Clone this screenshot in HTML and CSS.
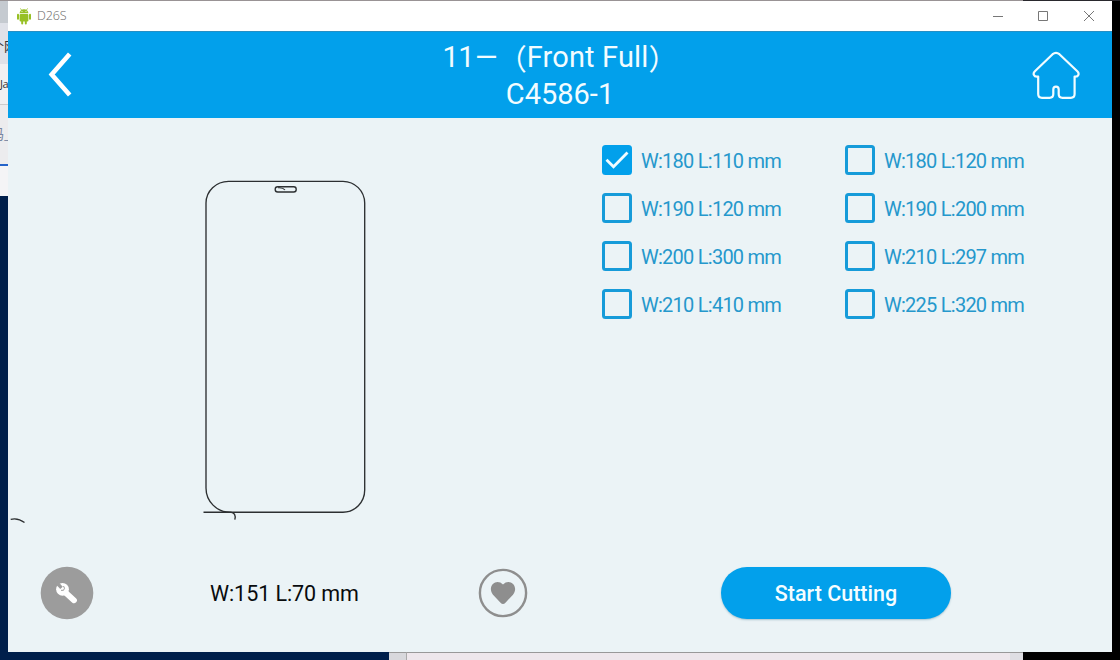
FILE: index.html
```html
<!DOCTYPE html>
<html lang="en">
<head>
<meta charset="utf-8">
<title>D26S</title>
<link rel="stylesheet" href="styles.css">
</head>
<body>
<div class="desktop">
  <div class="top-edge"><span class="top-light"></span><span class="top-dark"></span></div>
  <aside class="behind-left">
    <div class="tab-strip"></div>
    <div class="tab-label"><span>个网</span></div>
    <div class="bookmark"><span>Ja</span></div>
    <div class="link-row"><span>码_</span></div>
    <div class="blank-row"></div>
  </aside>
  <main class="window">
    <div class="titlebar">
      <svg class="android" width="14" height="17" viewBox="0 0 14 17" fill="#97c024">
        <path d="M2.6 5.3a4.4 4 0 0 1 8.8 0z"/>
        <path d="M3.4.4l1.4 2M10.6.4l-1.4 2" stroke="#97c024" stroke-width=".8"/>
        <rect x="2.6" y="5.9" width="8.8" height="7.6" rx="1"/>
        <rect x="0" y="5.8" width="2" height="6" rx="1"/><rect x="12" y="5.8" width="2" height="6" rx="1"/>
        <rect x="4.2" y="12" width="2" height="4.6" rx="1"/><rect x="7.8" y="12" width="2" height="4.6" rx="1"/>
        <circle cx="5" cy="3.5" r=".5" fill="#fff"/><circle cx="9" cy="3.5" r=".5" fill="#fff"/>
      </svg>
      <span class="app-name">D26S</span>
      <svg class="controls" width="104" height="12" viewBox="0 0 104 12" fill="none" stroke="#777" stroke-width="1">
        <path d="M0 6.5h10M45.500 1.500h9v9h-9zM91 1l10 10M101 1L91 11"/>
      </svg>
    </div>
    <header class="header">
      <svg class="back" width="24" height="46" viewBox="0 0 24 46" fill="none" stroke="#fff" stroke-width="4.600"><path d="M21.700 2L3.700 22.500l18 20.500"/></svg>
      <h1 class="title"><span class="title-model"><span class="num">11</span><span class="dash">—</span><span class="paren">（</span><span class="name">Front Full</span><span class="paren">）</span></span><span class="title-code">C4586-1</span></h1>
      <svg class="home" width="48" height="49" viewBox="0 0 48 49" fill="none" stroke="#f2fcff" stroke-width="2.200" stroke-linejoin="round"><path d="M20.600 3.200Q24 .500 27.400 3.200L45.300 20.200C47.700 22.500 46.500 25.700 43.300 25.600H42.600V43Q42.600 46.800 38.800 46.800H30.500Q26.700 46.800 26.700 43V38.500C26.700 34.700 21.300 34.700 21.300 38.500V43Q21.300 46.800 17.500 46.800H10Q6.200 46.800 6.200 43V25.600H5C1.800 25.700.500 22.500 2.900 20.200Z"/></svg>
    </header>
    <section class="content">
      <div class="preview">
        <svg width="390" height="430" viewBox="0 0 390 430" fill="none" stroke="#2c2f31" stroke-width="1.350">
          <path d="M220.500 63.300H335A21.700 22 0 0 1 356.700 85V372A21.700 22.200 0 0 1 335 394.200H222A24 24.200 0 0 1 198 370V85A22.500 21.700 0 0 1 220.500 63.300Z"/>
          <rect x="267.200" y="68.700" width="21" height="5.300" rx="2.500"/>
          <path d="M270 69.800q5-.500 7 2.200" stroke-width="1.100"/>
          <path d="M195.500 394.200h27q6 .700 4.300 7.500M2.700 401.300Q10 399.500 16.500 404.500"/>
        </svg>
      </div>
      <div class="sizes">
        <label class="size"><span class="box checked"><svg width="30" height="30" viewBox="0 0 30 30" fill="none" stroke="#f2fcff" stroke-width="2.800"><path d="M4.500 14.800l7 7L25.500 7.500"/></svg></span><span class="size-text">W:180 L:110 mm</span></label>
        <label class="size"><span class="box"></span><span class="size-text">W:180 L:120 mm</span></label>
        <label class="size"><span class="box"></span><span class="size-text">W:190 L:120 mm</span></label>
        <label class="size"><span class="box"></span><span class="size-text">W:190 L:200 mm</span></label>
        <label class="size"><span class="box"></span><span class="size-text">W:200 L:300 mm</span></label>
        <label class="size"><span class="box"></span><span class="size-text">W:210 L:297 mm</span></label>
        <label class="size"><span class="box"></span><span class="size-text">W:210 L:410 mm</span></label>
        <label class="size"><span class="box"></span><span class="size-text">W:225 L:320 mm</span></label>
      </div>
    </section>
    <footer class="footer">
      <svg class="tool" width="54" height="54" viewBox="0 0 54 54"><circle cx="27" cy="27" r="26.300" fill="#9c9c9c"/>
        <path d="M22 23.300l12 11" stroke="#fff" stroke-width="5.800" stroke-linecap="round"/>
        <circle cx="22.500" cy="23.300" r="6.400" fill="#fff"/>
        <path d="M16.500 16.500l5 5.300" stroke="#9c9c9c" stroke-width="3.400"/>
        <path d="M23.500 20q2 2.300 0 4.300h-2.500" fill="none" stroke="#9c9c9c" stroke-width="1"/>
      </svg>
      <span class="measure">W:151 L:70 mm</span>
      <svg class="heart" width="50" height="50" viewBox="0 0 50 50"><circle cx="25" cy="25" r="23.100" fill="none" stroke="#8e8e8e" stroke-width="2.400"/><path d="M25 36Q23.800 36 22.300 34.400L15 26.700C8.500 18.500 18.300 9.500 25 16.500C31.700 9.500 41.500 18.500 35 26.700L27.700 34.400Q26.200 36 25 36Z" fill="#8e8e8e"/></svg>
      <button class="start">Start Cutting</button>
    </footer>
  </main>
  <div class="right-edge"></div>
  <div class="bottom-edge"><span class="b-navy"></span><span class="b-gray"></span><span class="b-pale"></span><span class="b-light"></span><span class="b-black"></span></div>
</div>
</body>
</html>
```

FILE: styles.css
```css
* { box-sizing: border-box; }
body { margin: 0; font-family: Roboto, "Noto Sans CJK SC", sans-serif; }
.desktop {
  width: 1120px; height: 660px; overflow: hidden;
  display: grid;
  grid-template-columns: 8px 1104px 8px;
  grid-template-rows: 1px 651px 8px;
  background: #000;
}
.top-edge, .bottom-edge { grid-column: 1 / -1; display: flex; }
.top-light { width: 1023px; background: #999395; }
.top-dark { flex: 1; background: #29282d; }

.behind-left {
  overflow: hidden; background: #001f4b;
  font: 13px/20px "Noto Sans CJK SC", sans-serif; color: #333;
  display: flex; flex-direction: column;
}
.behind-left > div { flex: none; overflow: hidden; display: flex; align-items: center; white-space: nowrap; }
.tab-strip { height: 22px; background: #c5cad0; }
.tab-label { height: 41px; background: #dfe1e8; }
.tab-label span { margin: 4px 0 0 -9px; }
.bookmark { height: 41px; background: #f0f0f2; border-bottom: 1px solid #ccc; }
.bookmark span { font: 11px/16px "Open Sans", sans-serif; letter-spacing: -.5px; }
.link-row { height: 61px; background: #ececee; border-bottom: 2px solid #2463c9; color: #7885a0; }
.link-row span { margin: 0 0 3px -10px; font-size: 14px; }
.blank-row { height: 30px; background: #f4f4f6; }

.window { background: #ebf3f6; display: grid; grid-template-rows: 30px 87px 430px 1fr; }
.titlebar { background: #fff; display: flex; align-items: center; padding: 0 15px 0 9px; }
.app-name { margin-left: 6px; font: 300 12.5px/18px "Open Sans", sans-serif; letter-spacing: -.1px; color: #666; }
.controls { margin-left: auto; margin-bottom: 1px; }

.header { background: #02a0eb; color: #f2fcff; display: grid; grid-template-columns: 150px 1fr 150px; border-top: 1px solid #268fc4; }
.back { margin: 20px 0 0 40px; }
.home { justify-self: end; margin: 19px 32px 0 0; }
.title { margin: 7px 0 0; font-size: 29px; line-height: 37px; font-weight: 400; display: flex; flex-direction: column; align-items: center; }
.title-model { display: flex; height: 37px; white-space: nowrap; }
.num { letter-spacing: -.5px; }
.dash { margin-left: 1px; }
.paren { font-family: "Noto Sans CJK SC", sans-serif; font-weight: 400; width: 29px; }
.name { letter-spacing: .15px; }
.title-code { letter-spacing: 0; }

.content { display: grid; grid-template-columns: 594px 1fr; }
.sizes { padding-top: 17.500px; display: grid; grid-template-columns: 243px 243px; grid-auto-rows: 48.330px; align-content: start; }
.size { display: flex; align-items: center; gap: 9px; height: 48px; color: #2598cc; font-size: 20px; letter-spacing: -.750px; white-space: nowrap; }
.size-text { padding-top: 2px; }
.box { flex: none; width: 30px; height: 30px; border: 3px solid #169bd9; border-radius: 3.500px; }
.box.checked { border: 0; background: #02a0eb; }
.box svg { display: block; }

.footer { display: flex; align-items: flex-start; padding: 18px 0 0 32px; }
.measure { width: 150px; margin: 14px 0 0 116px; font-size: 21.500px; line-height: 28px; letter-spacing: -.080px; white-space: nowrap; color: #080b0d; }
.heart { margin: 2px 0 0 117.500px; }
.start { margin: 1px 0 0 193.500px; width: 230px; height: 52px; padding: 1px 0 0; border: 0; border-radius: 26px; background: #02a0eb; color: #f5fdff; font: 500 21.500px/28px Roboto, sans-serif; box-shadow: 0 1px 2px #a7c3cf; }

.right-edge { background: #000; }
.bottom-edge > span { border-top: 1px solid #999; }
.b-navy { width: 389px; background: #001f4b; }
.bottom-edge .b-navy { border-color: #001f4b; }
.b-gray { width: 17px; background: #d8d8dc; }
.b-pale { width: 604px; background: #eee7ec; border-left: 1px solid #aaa; }
.b-light { width: 13px; background: #dedee3; }
.b-black { flex: 1; background: #000; }
.bottom-edge .b-black { border-color: #000; }
```
